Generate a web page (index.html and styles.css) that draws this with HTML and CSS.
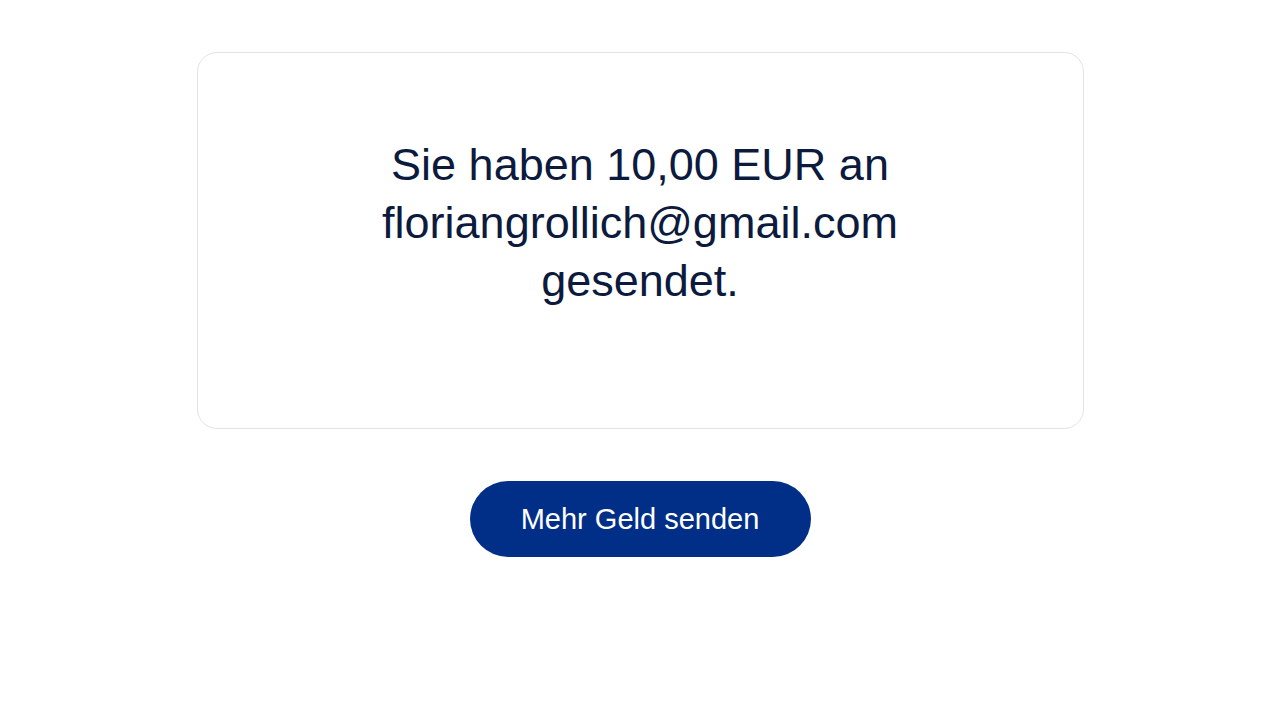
FILE: index.html
```html
<!DOCTYPE html>
<html lang="de">
<head>
    <meta charset="UTF-8">
    <meta name="viewport" content="width=device-width, initial-scale=1.0">
    <title>Zahlung gesendet</title>
    <link rel="stylesheet" href="styles.css">
</head>
<body>

    <div class="page">
        <div class="confirm-card">
            <p class="confirm-text">Sie haben 10,00 EUR an<br>floriangrollich@gmail.com<br>gesendet.</p>
        </div>

        <button class="send-more" type="button">Mehr Geld senden</button>
    </div>

</body>
</html>
```

FILE: styles.css
```css
body {
    margin: 0;
    background: #fff;
    font-family: "Liberation Sans", Arial, Helvetica, sans-serif;
}

.page {
    display: flex;
    flex-direction: column;
    align-items: center;
    padding-top: 52px;
}

.confirm-card {
    box-sizing: border-box;
    width: 887px;
    padding: 83px 40px 118px;
    border: 1px solid #e3e3e5;
    border-radius: 20px;
}

.confirm-text {
    margin: 0;
    font-size: 45px;
    line-height: 58px;
    text-align: center;
    color: #0b1a3d;
}

.send-more {
    margin-top: 52px;
    width: 341px;
    height: 76px;
    border: none;
    border-radius: 38px;
    background: #012f87;
    color: #fff;
    font-family: inherit;
    font-size: 29px;
    cursor: pointer;
}
```
